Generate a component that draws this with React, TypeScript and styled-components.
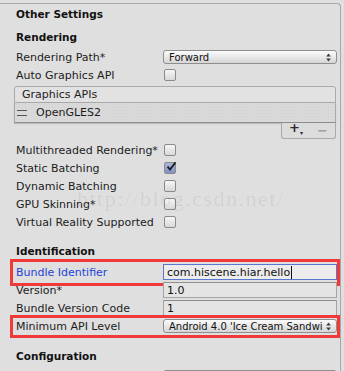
import React from 'react'
import styled, { createGlobalStyle, css } from 'styled-components'

const GlobalStyle = createGlobalStyle`
  html, body {
    margin: 0;
    padding: 0;
    background: #dfdfdf;
  }
  body {
    font-family: 'DejaVu Sans', Verdana, sans-serif;
    font-size: 11px;
    color: #1c1c1c;
  }
`

interface Setting {
  label: string
  checked?: boolean
}

const renderingToggles: Setting[] = [
  { label: 'Multithreaded Rendering*' },
  { label: 'Static Batching', checked: true },
  { label: 'Dynamic Batching' },
  { label: 'GPU Skinning*' },
  { label: 'Virtual Reality Supported' },
]

const UpDownArrows = () => (
  <svg width='5' height='9' viewBox='0 0 5 9'>
    <path d='M2.5 0.5 L4.8 3.6 H0.2 Z' fill='#3a3a3a' />
    <path d='M2.5 8.5 L4.8 5.4 H0.2 Z' fill='#3a3a3a' />
  </svg>
)

const CheckMark = () => (
  <svg width='12' height='12' viewBox='0 0 12 12'>
    <path
      d='M2.6 5.6 L5 8.6 L10.6 1.4'
      fill='none'
      stroke='#1e1e1e'
      strokeWidth='1.8'
    />
  </svg>
)

const App = () => (
  <Page>
    <GlobalStyle />
    <Panel>
      <FoldoutTitle>Other Settings</FoldoutTitle>

      <SectionTitle $top={4}>Rendering</SectionTitle>
      <Rows $top={2}>
        <Row>
          <Label>Rendering Path*</Label>
          <Popup>
            <span>Forward</span>
            <UpDownArrows />
          </Popup>
        </Row>
        <Row>
          <Label>Auto Graphics API</Label>
          <Toggle />
        </Row>
      </Rows>

      <ReorderList>
        <ListHeader>Graphics APIs</ListHeader>
        <ListElement>
          <Handle />
          OpenGLES2
        </ListElement>
        <ListFooter>
          <FooterButton>
            +<small>▾</small>
          </FooterButton>
          <FooterButton $disabled>−</FooterButton>
        </ListFooter>
      </ReorderList>

      <Rows $top={2}>
        {renderingToggles.map((setting) => (
          <Row key={setting.label}>
            <Label>{setting.label}</Label>
            <Toggle $checked={setting.checked}>
              {setting.checked && <CheckMark />}
            </Toggle>
          </Row>
        ))}
      </Rows>

      <SectionTitle $top={11}>Identification</SectionTitle>
      <Rows $top={3}>
        <Row $mark={{ top: 4, bottom: 5 }}>
          <Label $focused>Bundle Identifier</Label>
          <TextField $focused>
            com.hiscene.hiar.hello
            <Caret />
          </TextField>
        </Row>
        <Row>
          <Label>Version*</Label>
          <TextField>1.0</TextField>
        </Row>
        <Row>
          <Label>Bundle Version Code</Label>
          <TextField>1</TextField>
        </Row>
        <Row $mark={{ top: 2, bottom: 3 }}>
          <Label>Minimum API Level</Label>
          <Popup>
            <span>Android 4.0 'Ice Cream Sandwi</span>
            <UpDownArrows />
          </Popup>
        </Row>
      </Rows>

      <SectionTitle $top={12}>Configuration</SectionTitle>
      <Rows $top={3}>
        <Row>
          <Label />
          <Popup />
        </Row>
      </Rows>
    </Panel>
    <Watermark>http://blog.csdn.net/</Watermark>
  </Page>
)

const Page = styled.div`
  position: relative;
  width: 344px;
  height: 371px;
  overflow: hidden;
  padding-top: 3px;
  box-sizing: border-box;
`

const Panel = styled.div`
  width: 341px;
  height: 420px;
  box-sizing: border-box;
  border-top: 1px solid #a8a8a8;
  border-right: 1px solid #a8a8a8;
  border-top-right-radius: 4px;
  padding: 0 3px 0 16px;
`

const FoldoutTitle = styled.div`
  height: 20px;
  line-height: 20px;
  font-weight: bold;
  font-size: 10.5px;
  color: #111;
`

const SectionTitle = styled.div<{ $top: number }>`
  margin-top: ${({ $top }) => $top}px;
  height: 18px;
  line-height: 18px;
  font-weight: bold;
  font-size: 10.5px;
  color: #111;
`

const Rows = styled.div<{ $top: number }>`
  margin-top: ${({ $top }) => $top}px;
  display: flex;
  flex-direction: column;
`

const Row = styled.div<{ $mark?: { top: number; bottom: number } }>`
  position: relative;
  height: 18px;
  display: grid;
  grid-template-columns: 147px 1fr;
  align-items: center;

  ${({ $mark }) =>
    $mark &&
    css`
      &::after {
        content: '';
        position: absolute;
        top: -${$mark.top}px;
        bottom: -${$mark.bottom}px;
        left: -6px;
        right: -3px;
        border: 3px solid #f03a3a;
        pointer-events: none;
      }
    `}
`

const Label = styled.span<{ $focused?: boolean }>`
  white-space: nowrap;
  color: ${({ $focused }) => ($focused ? '#1d43d8' : '#1c1c1c')};
`

const Popup = styled.div`
  height: 14px;
  box-sizing: border-box;
  display: flex;
  align-items: center;
  justify-content: space-between;
  padding: 0 5px 0 5px;
  border: 1px solid #8e8e8e;
  border-radius: 3px;
  background: linear-gradient(#fbfbfb, #e4e4e4 60%, #d6d6d6);
  font-size: 10px;
  color: #111;
  white-space: nowrap;
  overflow: hidden;

  svg {
    flex-shrink: 0;
  }
`

const Toggle = styled.div<{ $checked?: boolean }>`
  position: relative;
  width: 12px;
  height: 12px;
  margin-left: 1px;
  box-sizing: border-box;
  border: 1px solid #8a8a8a;
  border-radius: 2px;
  background: ${({ $checked }) =>
    $checked
      ? 'linear-gradient(#a9b7dc, #7f93c4)'
      : 'linear-gradient(#f6f6f6, #d8d8d8)'};

  svg {
    position: absolute;
    left: 0;
    top: -2px;
  }
`

const ReorderList = styled.div`
  margin: 2px 1px 0 -2px;
  display: flex;
  flex-direction: column;
`

const ListHeader = styled.div`
  height: 17px;
  box-sizing: border-box;
  border: 1px solid #a9a9a9;
  border-radius: 3px 3px 0 0;
  background: #e2e2e2;
  padding-left: 7px;
  line-height: 15px;
`

const ListElement = styled.div`
  height: 20px;
  box-sizing: border-box;
  display: flex;
  align-items: center;
  gap: 9px;
  padding-left: 2px;
  border: 1px solid #a9a9a9;
  border-top: none;
  border-bottom-color: #8c8c8c;
  background-color: #d9d9d9;
  background-image: radial-gradient(#d2d2d2 0.6px, transparent 0.8px);
  background-size: 3px 3px;
  box-shadow: 0 1px 1px rgba(0, 0, 0, 0.15);
`

const Handle = styled.span`
  width: 10px;
  height: 4px;
  border-top: 1px solid #555;
  border-bottom: 1px solid #555;
`

const ListFooter = styled.div`
  align-self: flex-end;
  width: 55px;
  height: 16px;
  box-sizing: border-box;
  display: flex;
  align-items: center;
  justify-content: space-around;
  border: 1px solid #a9a9a9;
  border-top: none;
  border-radius: 0 0 3px 3px;
  background: #dcdcdc;
`

const FooterButton = styled.span<{ $disabled?: boolean }>`
  font-size: 13px;
  font-weight: bold;
  line-height: 14px;
  color: ${({ $disabled }) => ($disabled ? '#a2a2a2' : '#2a2a2a')};

  small {
    font-size: 6px;
    vertical-align: -3px;
  }
`

const TextField = styled.div<{ $focused?: boolean }>`
  height: 16px;
  box-sizing: border-box;
  display: flex;
  align-items: center;
  padding-left: 3px;
  border: 1px solid ${({ $focused }) => ($focused ? '#5a76cf' : '#a3a3a3')};
  border-top-color: ${({ $focused }) => ($focused ? '#5a76cf' : '#8f8f8f')};
  background: ${({ $focused }) => ($focused ? '#ececec' : '#e4e4e4')};
  color: #111;
  white-space: nowrap;
  overflow: hidden;
`

const Caret = styled.span`
  width: 1px;
  height: 13px;
  margin-left: 1px;
  background: #111;
`

const Watermark = styled.div`
  position: absolute;
  left: 77px;
  top: 188px;
  font-family: 'Liberation Serif', 'Times New Roman', serif;
  font-size: 22px;
  line-height: 22px;
  letter-spacing: 1.5px;
  color: rgba(0, 0, 0, 0.07);
  pointer-events: none;
  white-space: nowrap;
`

export default App
